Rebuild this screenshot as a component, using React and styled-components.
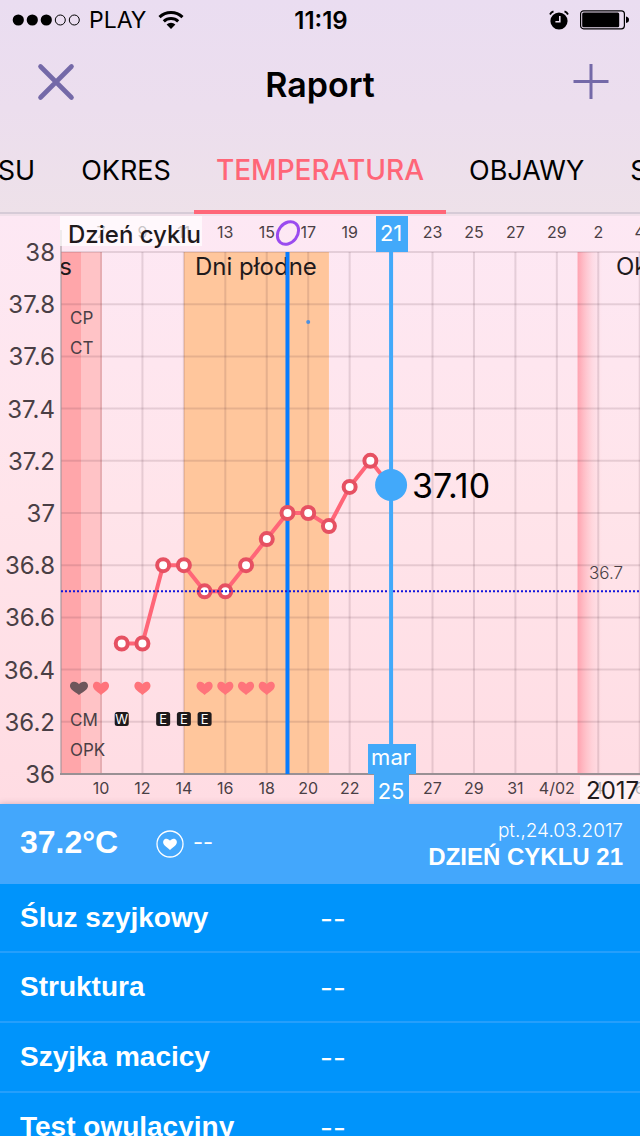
import React, { Component } from 'react';
import styled, { createGlobalStyle } from 'styled-components';

const colors = {
  accent: '#ff6678',
  purple: '#7469a8',
  marker: '#42a9fa',
  summary: '#43a7fc',
  panel: '#0094fb',
  ovulation: '#087cff',
};

const fonts = {
  ui: "Inter, 'Liberation Sans', sans-serif",
  panel: "'Liberation Sans', Arial, sans-serif",
};

const GlobalStyle = createGlobalStyle`
  * {
    box-sizing: border-box;
  }
  body {
    margin: 0;
    background: ${colors.panel};
    font-family: ${fonts.ui};
  }
`;

const Page = styled.div`
  width: 100%;
  overflow: hidden;
`;

const Top = styled.header`
  background: linear-gradient(#eaddf1, #ecdeee 50%, #eee1e9);
  color: #000;
`;

const StatusBar = styled.div`
  display: grid;
  grid-template-columns: 1fr auto 1fr;
  align-items: center;
  height: 40px;
  padding: 0 10px 0 12px;
  font-size: 23px;
`;

const StatusGroup = styled.div`
  display: flex;
  align-items: center;
  justify-content: ${props => (props.end ? 'flex-end' : 'flex-start')};
  gap: ${props => (props.end ? '11px' : '8px')};
`;

const Clock = styled.time`
  font-size: 24px;
  font-weight: 600;
`;

const Carrier = styled.span`
  margin-right: 4px;
`;

const TitleBar = styled.div`
  display: grid;
  grid-template-columns: 1fr auto 1fr;
  align-items: center;
  height: 88px;
  padding: 0 31px;
`;

const Title = styled.h1`
  margin: 0;
  font-size: 34px;
  font-weight: 600;
`;

const IconButton = styled.button`
  display: flex;
  justify-self: ${props => (props.end ? 'end' : 'start')};
  margin-bottom: 4px;
  padding: ${props => (props.end ? '0' : '0 6px')};
  border: 0;
  background: none;
`;

const Tabs = styled.nav`
  display: grid;
  grid-template-columns: 1fr auto 1fr;
  height: 88px;
  border-bottom: 2px solid #f1e0ea;
`;

const TabGroup = styled.div`
  display: flex;
  min-width: 0;
  overflow: hidden;
  justify-content: ${props => (props.end ? 'flex-end' : 'flex-start')};
  border-bottom: 2px solid #d6cbd7;
`;

const Tab = styled.button`
  flex-shrink: 0;
  height: 86px;
  padding: ${props => (props.active ? '2px 22px 0' : '2px 23px 0')};
  border: 0;
  border-bottom: 4px solid ${props => (props.active ? colors.accent : 'transparent')};
  background: none;
  font-family: ${fonts.ui};
  font-size: ${props => (props.active ? '28px' : '27px')};
  font-weight: ${props => (props.active ? 500 : 400)};
  color: ${props => (props.active ? colors.accent : '#000')};
`;

const ChartArea = styled.main`
  background: linear-gradient(#fde8f4, #ffe4ea 50%, #ffdce3);
`;

const ChartSvg = styled.svg`
  display: block;
  width: 100%;
  height: 588px;
  font-family: ${fonts.ui};
`;

const ScaleText = styled.text`
  font-size: 24px;
  fill: #4a3f45;
`;

const DayText = styled.text`
  font-size: 16px;
  fill: #4a3f45;
`;

const RowText = styled.text`
  font-size: 17px;
  fill: #4a3f45;
`;

const PhaseText = styled.text`
  font-size: 24px;
  fill: #1f1a1c;
`;

const MarkerText = styled.text`
  font-size: 22px;
  fill: #fff;
`;

const ValueText = styled.text`
  font-size: 34px;
  fill: #000;
`;

const BadgeText = styled.text`
  font-size: 13px;
  fill: #fff;
`;

const Summary = styled.section`
  display: flex;
  align-items: center;
  height: 80px;
  padding: 0 17px 0 20px;
  background: ${colors.summary};
  box-shadow: 0 0 6px rgba(90, 60, 80, 0.3);
  color: #fff;
  font-family: ${fonts.panel};
`;

const Temperature = styled.strong`
  width: 135px;
  font-size: 32px;
  padding-bottom: 4px;
`;

const Dashes = styled.span`
  margin-left: 8px;
  padding-bottom: 4px;
  font-family: ${fonts.ui};
  font-size: 22px;
`;

const DayInfo = styled.div`
  margin-left: auto;
  text-align: right;
  line-height: 26px;
`;

const DateText = styled.div`
  font-family: ${fonts.ui};
  font-size: 19px;
  font-weight: 300;
`;

const CycleDay = styled.div`
  font-size: 24px;
  font-weight: 700;
`;

const Details = styled.table`
  width: 100%;
  border-spacing: 0;
  table-layout: fixed;
  background: ${colors.panel};
  color: #fff;
`;

const DetailRow = styled.tr`
  height: 70px;

  &:first-child {
    height: 69px;
  }
  > * {
    border-bottom: 2px solid #259ffb;
  }
`;

const DetailName = styled.th`
  width: 50%;
  padding: 0 0 0 20px;
  text-align: left;
  font-family: ${fonts.panel};
  font-size: 28px;
  font-weight: 700;
`;

const DetailValue = styled.td`
  padding: 2px 0 0;
  font-size: 28px;
`;

// chart scale: the x axis counts days of the month, the y axis degrees
const DAY = 20.72;
const LEFT = 61;
const TOP = 36;
const BOTTOM = 558;
const dayX = day => 101 + (day - 10) * DAY;
const tempY = temp => TOP + (38 - temp) * 261;

const scale = ['38', '37.8', '37.6', '37.4', '37.2', '37', '36.8', '36.6', '36.4', '36.2', '36'];
const cycleDays = [[10, '7'], [12, '9'], [14, '11'], [16, '13'], [18, '15'], [20, '17'], [22, '19'], [26, '23'], [28, '25'], [30, '27'], [32, '29'], [34, '2'], [36, '4']];
const dates = [[10, '10'], [12, '12'], [14, '14'], [16, '16'], [18, '18'], [20, '20'], [22, '22'], [26, '27'], [28, '29'], [30, '31'], [32, '4/02'], [34, '4'], [36, '6']];
const readings = [
  [11, 36.5], [12, 36.5], [13, 36.8], [14, 36.8], [15, 36.7], [16, 36.7], [17, 36.8],
  [18, 36.9], [19, 37], [20, 37], [21, 36.95], [22, 37.1], [23, 37.2], [24, 37.1],
];
const gridDays = [10, 12, 14, 16, 18, 20, 22, 24, 26, 28, 30, 32, 34, 36];
const hearts = [10, 12, 15, 16, 17, 18];
const mucus = [[11, 'W'], [13, 'E'], [14, 'E'], [15, 'E']];
const details = ['Śluz szyjkowy', 'Struktura', 'Szyjka macicy', 'Test owulacyjny'];

const heartPath = 'M0 7C-2 5-5 3.5-6.8 1.2C-8.2-0.6-8.6-3-7.3-4.7C-6-6.4-3.4-6.6-1.8-5.4C-1-4.9-0.4-4.5 0-3.8C0.4-4.5 1-4.900 1.800-5.4C3.4-6.6 6-6.4 7.3-4.7C8.6-3 8.2-0.6 6.8 1.2C5 3.5 2 5 0 7Z';

const Signal = () => (
  <svg width="69" height="14" viewBox="0 0 69 14">
    {[0, 1, 2, 3, 4].map(i => (
      <circle key={i} cx={6.3 + i * 14} cy="7" r={i < 3 ? 5.6 : 5} fill={i < 3 ? '#000' : 'none'} stroke="#000" strokeWidth={i < 3 ? 0 : 1} />
    ))}
  </svg>
);

const Wifi = () => (
  <svg width="26" height="20" viewBox="0 0 26 20">
    <g fill="none" stroke="#000" strokeWidth="3">
      <path d="M1.5 7.2A16.5 16.5 0 0 1 24.5 7.2" />
      <path d="M5.8 11.4A10.4 10.4 0 0 1 20.2 11.4" />
    </g>
    <path d="M13 19L8.6 14.6A6.2 6.2 0 0 1 17.4 14.6Z" />
  </svg>
);

const Alarm = () => (
  <svg width="20" height="20" viewBox="0 0 20 20">
    <circle cx="10" cy="11" r="8.6" />
    <path d="M1 4.5A6 6 0 0 1 4.5 1.4M15.5 1.4A6 6 0 0 1 19 4.5" fill="none" stroke="#000" strokeWidth="1.8" />
    <path d="M10.8 6V11.8H6.4" fill="none" stroke="#ebdff0" strokeWidth="1.6" />
  </svg>
);

const Battery = () => (
  <svg width="50" height="20" viewBox="0 0 50 20">
    <rect x="0.6" y="0.8" width="43.8" height="18" rx="3" fill="none" stroke="#000" strokeWidth="1.2" />
    <rect x="2.2" y="2.4" width="37" height="14.8" rx="1.5" />
    <path d="M46 6.5C48 7 49 8 49 9.8C49 11.6 48 12.6 46 13Z" />
  </svg>
);

const Chart = () => (
  <ChartSvg role="img" aria-label="Temperatura">
    <defs>
      <linearGradient id="period">
        <stop offset="0" stopColor="#ff9aa8" stopOpacity="0.9" />
        <stop offset="0.25" stopColor="#ffa8b2" stopOpacity="0.65" />
        <stop offset="0.6" stopColor="#ffb4bc" stopOpacity="0.25" />
        <stop offset="1" stopColor="#ffc4cc" stopOpacity="0" />
      </linearGradient>
      <clipPath id="plot">
        <rect x={LEFT} y={TOP} width="100%" height={BOTTOM - TOP} />
      </clipPath>
    </defs>

    <rect x={LEFT} y={TOP} width="20" height={BOTTOM - TOP} fill="#ffa6aa" />
    <rect x="81" y={TOP} width="21" height={BOTTOM - TOP} fill="#ffc3c6" />
    <rect x={dayX(14)} y={TOP} width={DAY * 7} height={BOTTOM - TOP} fill="#ffc69c" />
    <rect x={dayX(33)} y={TOP} width="25" height={BOTTOM - TOP} fill="url(#period)" />

    <g stroke="#3c2030" strokeOpacity="0.13" strokeWidth="2">
      {scale.slice(0, -1).map(t => <line key={t} x1={LEFT} x2="100%" y1={tempY(t)} y2={tempY(t)} />)}
      {gridDays.map(d => <line key={d} x1={dayX(d)} x2={dayX(d)} y1={TOP} y2={BOTTOM} />)}
    </g>
    <line x1="61" x2="61" y1="14" y2="559" stroke="#9a8f95" strokeWidth="1" />
    <line x1="60" x2="100%" y1={BOTTOM} y2={BOTTOM} stroke="#999094" strokeWidth="2" />

    {scale.map(t => <ScaleText key={t} x="55" y={tempY(t) + 9} textAnchor="end">{t}</ScaleText>)}
    {cycleDays.map(([d, label]) => <DayText key={d} x={dayX(d)} y="22" textAnchor="middle">{label}</DayText>)}
    {dates.map(([d, label]) => <DayText key={d} x={dayX(d)} y="578" textAnchor="middle">{label}</DayText>)}

    <rect x="60" y="0" width="142" height="30" fill="#fff" fillOpacity="0.7" />
    <PhaseText x="68" y="27" fontWeight="500">Dzień cyklu</PhaseText>
    <rect x="580" y="560" width="100%" height="28" fill="#fff" fillOpacity="0.6" />
    <PhaseText x="586" y="583">2017</PhaseText>

    <g clipPath="url(#plot)">
      <PhaseText x="72" y="59" textAnchor="end">Okres</PhaseText>
    </g>
    <PhaseText x="195" y="59">Dni płodne</PhaseText>
    <PhaseText x="616" y="59">Okres</PhaseText>

    <RowText x="70" y="108">CP</RowText>
    <RowText x="70" y="138">CT</RowText>
    <RowText x="70" y="510">CM</RowText>
    <RowText x="70" y="540">OPK</RowText>
    <RowText x="589" y="363" fontWeight="300">36.7</RowText>

    <path d={heartPath} transform="translate(79 472) scale(1.12 1)" fill="#6e565b" />
    {hearts.map(d => <path key={d} d={heartPath} transform={`translate(${dayX(d)} 472)`} fill="#ff747b" />)}
    {mucus.map(([d, label]) => (
      <g key={d}>
        <rect x={dayX(d) - 7} y="496" width="14" height="14" rx="2.5" fill="#1f1a1c" />
        <BadgeText x={dayX(d)} y="508" textAnchor="middle">{label}</BadgeText>
      </g>
    ))}
    <circle cx={dayX(20)} cy="106" r="2" fill="#4a90e2" />

    <ellipse cx="288" cy="17" rx="9.5" ry="12.2" transform="rotate(38 288 17)" fill="none" stroke="#9a4bef" strokeWidth="3" />
    <line x1={dayX(19)} x2={dayX(19)} y1={TOP} y2={BOTTOM} stroke={colors.ovulation} strokeWidth="4" />

    <polyline points={readings.map(([d, t]) => `${dayX(d)},${tempY(t)}`).join(' ')} fill="none" stroke="#ff6678" strokeWidth="4" />
    {readings.slice(0, -1).map(([d, t]) => (
      <circle key={d} cx={dayX(d)} cy={tempY(t)} r="6" fill="#fff" stroke="#e65162" strokeWidth="4" />
    ))}
    <line x1={LEFT} x2="100%" y1={tempY(36.7)} y2={tempY(36.7)} stroke="#1414dc" strokeWidth="2" strokeDasharray="2" />

    <line x1={dayX(24)} x2={dayX(24)} y1={TOP} y2={BOTTOM} stroke={colors.marker} strokeWidth="4" />
    <circle cx={dayX(24)} cy="269" r="16" fill={colors.marker} />
    <ValueText x="412" y="282">37.10</ValueText>
    <g fill={colors.marker}>
      <rect x="376" y="0" width="32" height="36" />
      <rect x="368" y="528" width="48" height="30" />
      <rect x="374" y="558" width="35" height="30" />
    </g>
    <MarkerText x={dayX(24)} y="25" textAnchor="middle">21</MarkerText>
    <MarkerText x={dayX(24)} y="549" textAnchor="middle">mar</MarkerText>
    <MarkerText x={dayX(24)} y="583" textAnchor="middle">25</MarkerText>
  </ChartSvg>
);

class App extends Component {
  state = {
    tab: 'TEMPERATURA'
  }

  renderTab(name) {
    return (
      <Tab key={name} type="button" active={this.state.tab === name ? 1 : undefined} onClick={() => this.setState({ tab: name })}>
        {name}
      </Tab>
    )
  }

  render() {
    return (
      <Page>
        <GlobalStyle />
        <Top>
          <StatusBar>
            <StatusGroup>
              <Signal />
              <Carrier>PLAY</Carrier>
              <Wifi />
            </StatusGroup>
            <Clock>11:19</Clock>
            <StatusGroup end={1}>
              <Alarm />
              <Battery />
            </StatusGroup>
          </StatusBar>
          <TitleBar>
            <IconButton type="button" aria-label="Zamknij">
              <svg width="38" height="38" viewBox="0 0 38 38">
                <path d="M3.5 3.5L34.5 34.5M34.5 3.5L3.5 34.5" stroke={colors.purple} strokeWidth="4.6" strokeLinecap="round" />
              </svg>
            </IconButton>
            <Title>Raport</Title>
            <IconButton type="button" aria-label="Dodaj" end={1}>
              <svg width="36" height="36" viewBox="0 0 36 36">
                <path d="M0.5 17.5H35.5M18 0V35" stroke={colors.purple} strokeWidth="3" />
              </svg>
            </IconButton>
          </TitleBar>
          <Tabs>
            <TabGroup end={1}>
              {this.renderTab('SU')}
              {this.renderTab('OKRES')}
            </TabGroup>
            {this.renderTab('TEMPERATURA')}
            <TabGroup>
              {this.renderTab('OBJAWY')}
              {this.renderTab('S')}
            </TabGroup>
          </Tabs>
        </Top>
        <ChartArea>
          <Chart />
        </ChartArea>
        <Summary>
          <Temperature>37.2°C</Temperature>
          <svg width="30" height="30" viewBox="0 0 30 30">
            <circle cx="15" cy="15" r="13" fill="none" stroke="#fff" strokeWidth="1.3" />
            <path d={heartPath} transform="translate(15 15) scale(0.85)" fill="#fff" />
          </svg>
          <Dashes>--</Dashes>
          <DayInfo>
            <DateText>pt.,24.03.2017</DateText>
            <CycleDay>DZIEŃ CYKLU 21</CycleDay>
          </DayInfo>
        </Summary>
        <Details>
          <tbody>
            {details.map(name => (
              <DetailRow key={name}>
                <DetailName scope="row">{name}</DetailName>
                <DetailValue>--</DetailValue>
              </DetailRow>
            ))}
          </tbody>
        </Details>
      </Page>
    )
  }
}

export default App;
